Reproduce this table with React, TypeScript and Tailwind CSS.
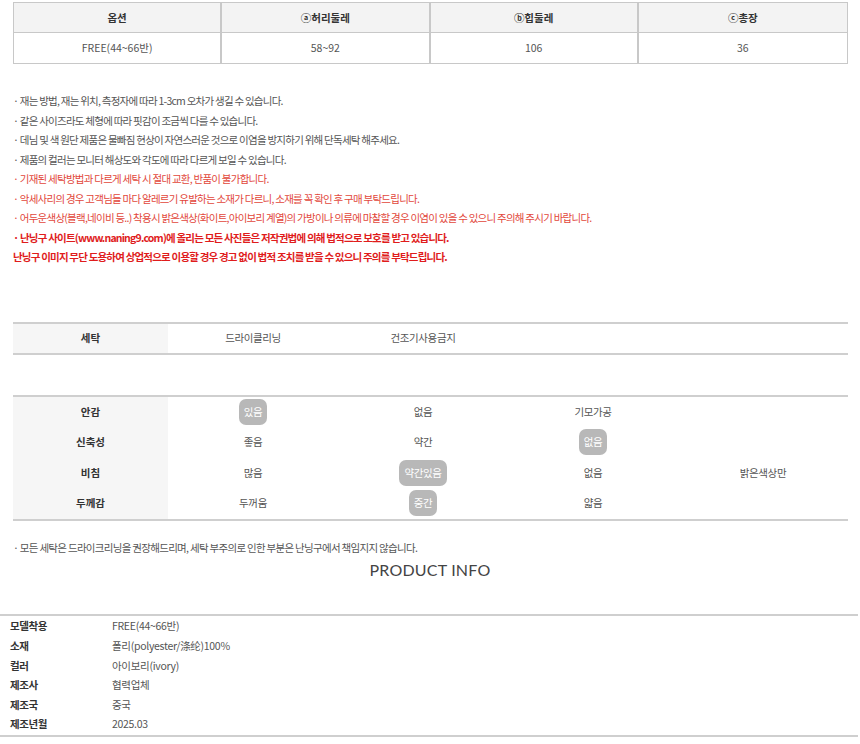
import React from 'react';

const SIZE_HEAD = ['옵션', 'ⓐ허리둘레', 'ⓑ힙둘레', 'ⓒ총장'];
const SIZE_ROW = ['FREE(44~66반)', '58~92', '106', '36'];

interface Note {
  text: string;
  tone: 'gray' | 'red' | 'bold';
}

const NOTES: Note[] = [
  { text: '· 재는 방법, 재는 위치, 측정자에 따라 1-3cm 오차가 생길 수 있습니다.', tone: 'gray' },
  { text: '· 같은 사이즈라도 체형에 따라 핏감이 조금씩 다를 수 있습니다.', tone: 'gray' },
  { text: '· 데님 및 색 원단 제품은 물빠짐 현상이 자연스러운 것으로 이염을 방지하기 위해 단독세탁 해주세요.', tone: 'gray' },
  { text: '· 제품의 컬러는 모니터 해상도와 각도에 따라 다르게 보일 수 있습니다.', tone: 'gray' },
  { text: '· 기재된 세탁방법과 다르게 세탁 시 절대 교환, 반품이 불가합니다.', tone: 'red' },
  { text: '· 악세사리의 경우 고객님들 마다 알레르기 유발하는 소재가 다르니, 소재를 꼭 확인 후 구매 부탁드립니다.', tone: 'red' },
  { text: '· 어두운색상(블랙,네이비 등..) 착용시 밝은색상(화이트,아이보리 계열)의 가방이나 의류에 마찰할 경우 이염이 있을 수 있으니 주의해 주시기 바랍니다.', tone: 'red' },
  { text: '· 난닝구 사이트(www.naning9.com)에 올리는 모든 사진들은 저작권법에 의해 법적으로 보호를 받고 있습니다.', tone: 'bold' },
  { text: '난닝구 이미지 무단 도용하여 상업적으로 이용할 경우 경고 없이 법적 조치를 받을 수 있으니 주의를 부탁드립니다.', tone: 'bold' },
];

const TONE: Record<Note['tone'], string> = {
  gray: 'text-[#555] tracking-[-0.75px]',
  red: 'text-[#e2473b] tracking-[-0.75px]',
  bold: 'text-[#e01c1c] font-bold tracking-[-0.8px]',
};

// value, selected
type Cell = [string, boolean] | null;

const FABRIC: { label: string; cells: Cell[] }[] = [
  { label: '안감', cells: [['있음', true], ['없음', false], ['기모가공', false], null] },
  { label: '신축성', cells: [['좋음', false], ['약간', false], ['없음', true], null] },
  { label: '비침', cells: [['많음', false], ['약간있음', true], ['없음', false], ['밝은색상만', false]] },
  { label: '두께감', cells: [['두꺼움', false], ['중간', true], ['얇음', false], null] },
];

const INFO = [
  ['모델착용', 'FREE(44~66반)'],
  ['소재', '폴리(polyester/涤纶)100%'],
  ['컬러', '아이보리(ivory)'],
  ['제조사', '협력업체'],
  ['제조국', '중국'],
  ['제조년월', '2025.03'],
];

function ValueCell({ cell }: { cell: Cell }) {
  return (
    <div className="w-[170px] flex items-center justify-center tracking-[-0.4px]">
      {cell && (
        <span
          className={
            cell[1]
              ? 'bg-[#b8b8b8] text-white rounded-[7px] px-[5px] h-[26px] flex items-center'
              : 'text-[#555]'
          }
        >
          {cell[0]}
        </span>
      )}
    </div>
  );
}

export default function App() {
  return (
    <div
      className="w-[860px] h-[744px] bg-white text-[10.5px] text-[#555] overflow-hidden"
      style={{ fontFamily: '"Noto Sans CJK KR", "Noto Sans", sans-serif' }}
    >
      <div className="pl-[13px] pr-[12px] pt-[2px]">
        {/* size table */}
        <div className="border border-[#c8c8c8] grid grid-cols-4">
          {SIZE_HEAD.map((h, i) => (
            <div
              key={h}
              className={`h-[30px] bg-[#f3f3f3] border-b border-[#c8c8c8] flex items-center justify-center font-bold text-[#333] ${
                i < 3 ? 'border-r-2' : ''
              }`}
            >
              {h}
            </div>
          ))}
          {SIZE_ROW.map((v, i) => (
            <div
              key={i}
              className={`h-[30px] flex items-center justify-center border-[#c8c8c8] ${i < 3 ? 'border-r-2' : ''}`}
            >
              {v}
            </div>
          ))}
        </div>

        {/* notes */}
        <div className="mt-[27px] flex flex-col">
          {NOTES.map((n) => (
            <div key={n.text} className={`h-[19.5px] leading-[19.5px] whitespace-nowrap ${TONE[n.tone]}`}>
              {n.text}
            </div>
          ))}
        </div>

        {/* wash */}
        <div className="mt-[55px] border-y-2 border-[#cfcfcf] flex h-[33px]">
          <div className="w-[155px] bg-[#f6f6f6] flex items-center justify-center font-bold text-[#333]">세탁</div>
          <ValueCell cell={['드라이클리닝', false]} />
          <ValueCell cell={['건조기사용금지', false]} />
        </div>

        {/* fabric */}
        <div className="mt-[40px] border-y-2 border-[#cfcfcf] flex flex-col">
          {FABRIC.map((row) => (
            <div key={row.label} className="flex h-[30.5px]">
              <div className="w-[155px] bg-[#f6f6f6] flex items-center justify-center font-bold text-[#333]">
                {row.label}
              </div>
              {row.cells.map((c, i) => (
                <ValueCell key={i} cell={c} />
              ))}
            </div>
          ))}
        </div>

        <div className="mt-[17px] h-[20px] leading-[20px] tracking-[-0.7px]">
          · 모든 세탁은 드라이크리닝을 권장해드리며, 세탁 부주의로 인한 부분은 난닝구에서 책임지지 않습니다.
        </div>
      </div>

      <div
        className="text-center text-[16px] text-[#444] h-[24px] leading-[24px] tracking-[0.2px]"
        style={{ fontFamily: 'Lato, sans-serif' }}
      >
        PRODUCT INFO
      </div>

      {/* product info */}
      <div className="mt-[32px] mr-[2px] border-y-2 border-[#cfcfcf] py-[1px]">
        {INFO.map(([k, v]) => (
          <div key={k} className="flex h-[19.6px] items-center">
            <div className="w-[112px] pl-[10px] font-bold text-[#333] tracking-[-0.4px]">{k}</div>
            <div className="tracking-[-0.3px]">{v}</div>
          </div>
        ))}
      </div>
    </div>
  );
}
